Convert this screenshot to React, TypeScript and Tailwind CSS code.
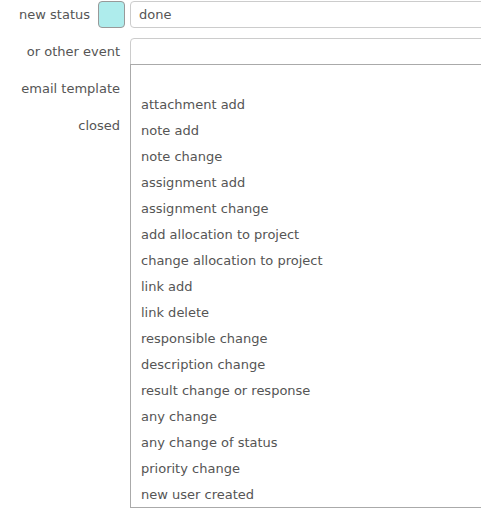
const events = [
  "",
  "attachment add",
  "note add",
  "note change",
  "assignment add",
  "assignment change",
  "add allocation to project",
  "change allocation to project",
  "link add",
  "link delete",
  "responsible change",
  "description change",
  "result change or response",
  "any change",
  "any change of status",
  "priority change",
  "new user created",
]

export default function App() {
  return (
    <div
      className="relative w-[481px] h-[522px] overflow-hidden bg-white text-[13px] text-[#555]"
      style={{ fontFamily: '"DejaVu Sans", Verdana, sans-serif' }}
    >
      <div className="flex flex-col gap-[10px] pt-[1px]">
        <div className="flex items-center h-[27px]">
          <div className="w-[90px] shrink-0 text-right">new status</div>
          <div className="ml-[8px] shrink-0 w-[27px] h-[27px] rounded-[4px] border border-[#999] bg-[#aeecec]" />
          <div className="ml-[5px] shrink-0 w-[400px] h-[27px] flex items-center pl-[8px] pt-[1px] border border-[#ccc] rounded-[4px] bg-white">
            done
          </div>
        </div>
        <div className="flex items-center h-[27px]">
          <div className="w-[120px] shrink-0 text-right pt-[1px]">or other event</div>
          <div className="ml-[10px] shrink-0 w-[400px] h-[27px] border border-[#ccc] rounded-t-[4px] bg-white" />
        </div>
        <div className="flex items-center h-[27px]">
          <div className="w-[120px] shrink-0 text-right pt-[1px]">email template</div>
        </div>
        <div className="flex items-center h-[27px]">
          <div className="w-[120px] shrink-0 text-right pt-[1px]">closed</div>
        </div>
      </div>

      <ul className="absolute left-[130px] top-[64px] w-[400px] border border-[#aaa] bg-white">
        {events.map((e, i) => (
          <li key={i} className="h-[26px] flex items-center pl-[10px] pt-[2px]">
            {e}
          </li>
        ))}
      </ul>
    </div>
  )
}
